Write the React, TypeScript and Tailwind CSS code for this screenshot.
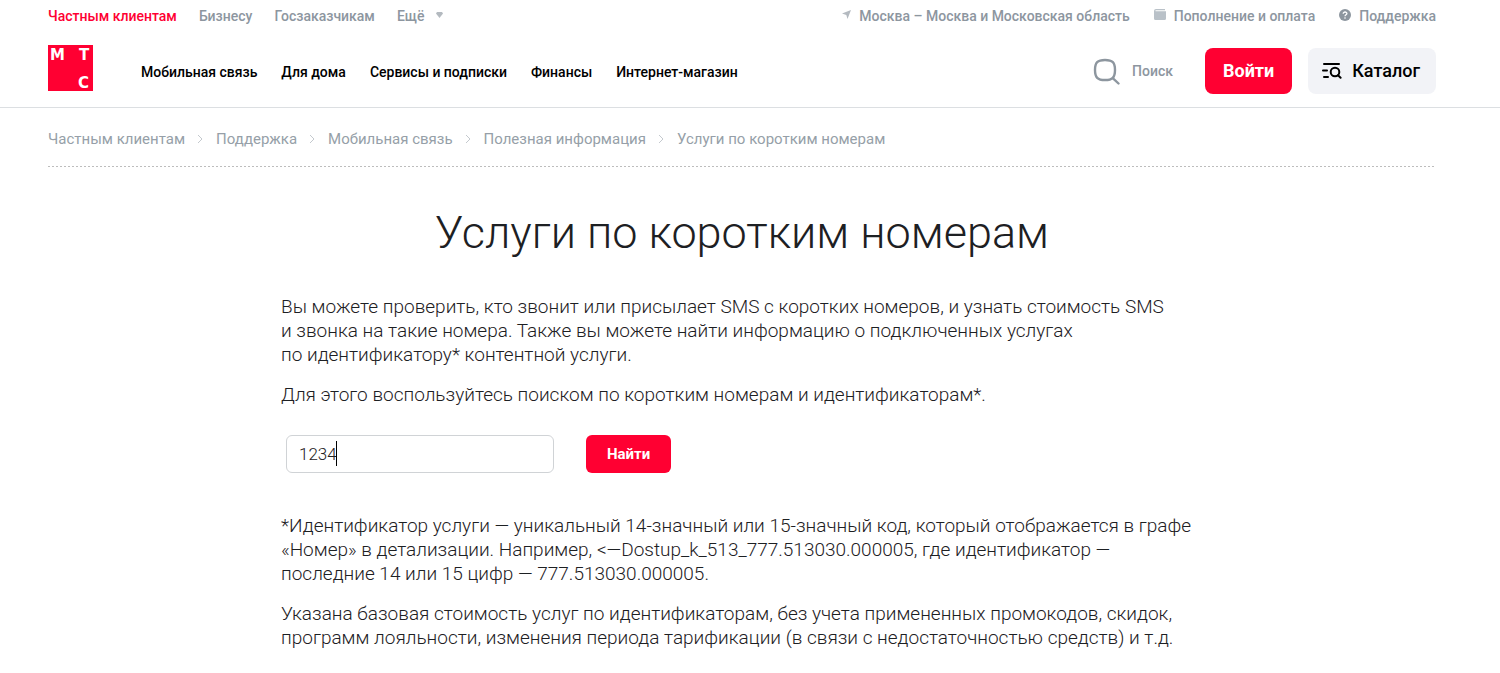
import { Fragment } from 'react';

const segments = ['Бизнесу', 'Госзаказчикам'];

const menu = ['Мобильная связь', 'Для дома', 'Сервисы и подписки', 'Финансы', 'Интернет-магазин'];

const crumbs = ['Частным клиентам', 'Поддержка', 'Мобильная связь', 'Полезная информация', 'Услуги по коротким номерам'];

const Logo = () => (
  <a href="#" aria-label="МТС" className="block shrink-0">
    <svg width="45" height="46" viewBox="0 0 45 46">
      <rect width="45" height="46" fill="#ff0032" />
      <g fill="#fff" fontFamily="'DejaVu Sans', sans-serif" fontWeight="700" fontSize="15">
        <text x="2" y="15">М</text>
        <text x="31" y="15">Т</text>
        <text x="30" y="43">С</text>
      </g>
    </svg>
  </a>
);

const SearchIcon = () => (
  <svg width="27" height="27" viewBox="0 0 27 27" fill="none" stroke="#8d969f" strokeWidth="2.4" strokeLinecap="round">
    <path d="M12 2C19.500 2 22 4.500 22 12S19.500 22 12 22 2 19.500 2 12 4.500 2 12 2Z" />
    <path d="M20 20.300 25.500 25.500" />
  </svg>
);

const CatalogIcon = () => (
  <svg width="20" height="18" viewBox="0 0 20 18" fill="none" stroke="#000" strokeWidth="2" strokeLinecap="round">
    <path d="M2 2h15M1 8.500h4M2 15h4" />
    <circle cx="13" cy="10" r="4.300" />
    <path d="m16 13.200 2.600 2.500" />
  </svg>
);

const TopBar = () => (
  <div className="flex justify-between text-sm leading-5 font-medium text-[#8d969f]">
    <nav className="flex gap-[22px] pt-1.5">
      <a href="#" className="text-[#ff0032]">Частным клиентам</a>
      {segments.map((item) => (
        <a key={item} href="#">{item}</a>
      ))}
      <button type="button" className="flex gap-3">
        Ещё
        <svg width="7" height="6" viewBox="0 0 7 6" className="mt-1.5" fill="#b4bac0">
          <path d="M1 0h5l1 1.500L3.500 6 0 1.500Z" />
        </svg>
      </button>
    </nav>
    <div className="flex gap-6 pt-1.5">
      <button type="button" className="flex gap-2">
        <svg width="9" height="9" viewBox="0 0 9 9" className="mt-1" fill="#b4bac0">
          <path d="M9 0 5.500 9 4.300 5 0 3.500Z" />
        </svg>
        Москва – Москва и Московская область
      </button>
      <a href="#" className="flex gap-2">
        <svg width="12" height="11" viewBox="0 0 12 11" className="mt-[3px]" fill="#b9c1c8">
          <path d="M2 0h9v1.200H1.500v1H12V9.500A1.500 1.500 0 0 1 10.500 11H1.500A1.500 1.500 0 0 1 0 9.500V2A2 2 0 0 1 2 0Z" />
        </svg>
        Пополнение и оплата
      </a>
      <a href="#" className="flex gap-2">
        <svg width="12" height="12" viewBox="0 0 12 12" className="mt-[3px]">
          <circle cx="6" cy="6" r="6" fill="#8d969f" />
          <path d="M4.200 4.700C4.200 2.400 8 2.500 7.900 4.600 7.800 5.800 6 5.800 6 7.200" fill="none" stroke="#fff" strokeWidth="1.300" />
          <circle cx="6" cy="9" r=".8" fill="#fff" />
        </svg>
        Поддержка
      </a>
    </div>
  </div>
);

const Header = () => (
  <header className="border-b border-[#dcdfe2] pr-16 pl-12">
    <TopBar />
    <div className="flex items-start justify-between pt-[19px] pb-[13px]">
      <div className="flex items-start gap-12">
        <Logo />
        <nav className="flex gap-6 pt-[17px] text-sm leading-5 font-medium text-black">
          {menu.map((item) => (
            <a key={item} href="#">{item}</a>
          ))}
        </nav>
      </div>
      <div className="flex items-center pt-[3px]">
        <button type="button" className="mr-8 flex items-center gap-3 text-sm leading-5 font-medium text-[#8d969f]">
          <SearchIcon />
          Поиск
        </button>
        <button type="button" className="mr-4 h-[46px] rounded-lg bg-[#ff0032] px-[18px] text-lg font-bold text-white">
          Войти
        </button>
        <button type="button" className="flex h-[46px] items-center gap-2.5 rounded-lg bg-[#f2f3f7] pr-4 pl-3.5 text-lg font-medium text-black">
          <CatalogIcon />
          Каталог
        </button>
      </div>
    </div>
  </header>
);

const Breadcrumbs = () => (
  <nav className="flex items-center gap-3 pt-[21px] text-[15px] leading-5 text-[#969fa8]">
    {crumbs.map((item, i) => (
      <Fragment key={item}>
        {i > 0 && (
          <svg width="7" height="10" viewBox="0 0 7 10" fill="none" stroke="#c4c9ce" strokeWidth="1">
            <path d="m1 1 4 4-4 4" />
          </svg>
        )}
        <a href="#">{item}</a>
      </Fragment>
    ))}
  </nav>
);

const SearchForm = () => (
  <form className="flex items-center gap-8 pt-7 pl-[5px]" onSubmit={(e) => e.preventDefault()}>
    <div className="relative">
      <input
        type="text"
        aria-label="Короткий номер или идентификатор"
        defaultValue="1234"
        className="block h-[38px] w-[268px] rounded-md border border-[#d0d3d6] px-3 text-[17px] font-[350] text-[#1d2023] outline-none"
      />
      <span className="absolute top-[6px] left-[50px] h-[25px] w-px bg-black" />
    </div>
    <button type="submit" className="h-[38px] rounded-md bg-[#ff0032] px-[21px] text-[15px] font-bold text-white">
      Найти
    </button>
  </form>
);

export default function App() {
  return (
    <div className="bg-white font-[Roboto,sans-serif] text-[#1d2023]">
      <Header />
      <main className="pr-16 pb-6 pl-12">
        <Breadcrumbs />
        <div className="mt-[17px] h-px bg-[repeating-linear-gradient(to_right,#bdbdbd_0_2px,transparent_2px_4px)]" />
        <h1 className="pt-9 text-center text-[45px] leading-[60px] font-[350]">Услуги по коротким номерам</h1>
        <div className="mx-auto max-w-[922px] pt-8 text-[19px] leading-6 font-[350]">
          <p>
            Вы можете проверить, кто звонит или присылает SMS с коротких номеров, и узнать стоимость SMS
            <br />
            и звонка на такие номера. Также вы можете найти информацию о подключенных услугах
            <br />
            по идентификатору* контентной услуги.
          </p>
          <p className="pt-4">Для этого воспользуйтесь поиском по коротким номерам и идентификаторам*.</p>
          <SearchForm />
          <p className="pt-[41px]">
            *Идентификатор услуги — уникальный 14-значный или 15-значный код, который отображается в графе
            <br />
            «Номер» в детализации. Например, &lt;—Dostup_k_513_777.513030.000005, где идентификатор —
            <br />
            последние 14 или 15 цифр — 777.513030.000005.
          </p>
          <p className="pt-4">
            Указана базовая стоимость услуг по идентификаторам, без учета примененных промокодов, скидок,
            <br />
            программ лояльности, изменения периода тарификации (в связи с недостаточностью средств) и т.д.
          </p>
        </div>
      </main>
    </div>
  );
}
